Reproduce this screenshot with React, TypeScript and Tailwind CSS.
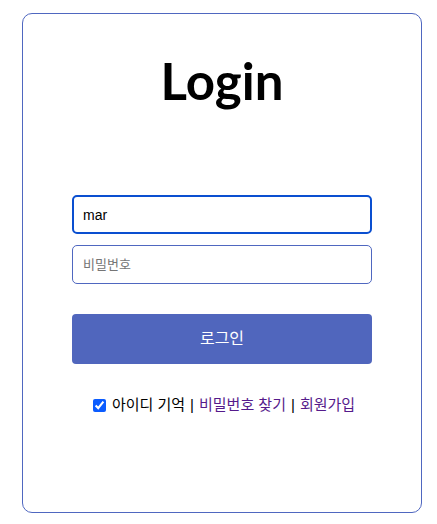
import React from "react";

export default function App() {
  return (
    <div className="min-h-[524px] w-[437px] bg-white" style={{ fontFamily: '"Liberation Sans", "Noto Sans CJK KR", sans-serif' }}>
      <div className="ml-[22px] pt-[13px]">
        <div className="flex h-[500px] w-[400px] flex-col items-center rounded-[10px] border border-[#4f67c0] bg-white">
          <h1
            className="mt-[35px] text-[51px] font-bold leading-[64px] text-black"
            style={{ fontFamily: 'Lato, sans-serif' }}
          >
            Login
          </h1>
          <input
            autoFocus
            defaultValue="mar"
            className="mt-[82px] h-[39px] w-[300px] rounded-[5px] border-2 border-[#0a4fd0] px-[9px] text-[14px] text-black outline-none"
          />
          <input
            placeholder="비밀번호"
            type="text"
            className="mt-[11px] h-[39px] w-[300px] rounded-[5px] border border-[#4f67c0] px-[10px] text-[13px] text-black outline-none placeholder:text-[#757575]"
          />
          <button className="mt-[30px] h-[50px] w-[300px] rounded-[4px] bg-[#5066bd] text-[16px] text-white">
            로그인
          </button>
          <div className="mt-[31px] ml-[4px] flex items-center text-[15px] leading-[20px] text-black">
            <input type="checkbox" defaultChecked className="mr-[6px] h-[13px] w-[13px] accent-[#0b5cff]" />
            <span>아이디 기억</span>
            <span className="mx-[5px]">|</span>
            <a href="#" className="text-[#551a8b]">비밀번호 찾기</a>
            <span className="mx-[5px]">|</span>
            <a href="#" className="text-[#551a8b]">회원가입</a>
          </div>
        </div>
      </div>
    </div>
  );
}
